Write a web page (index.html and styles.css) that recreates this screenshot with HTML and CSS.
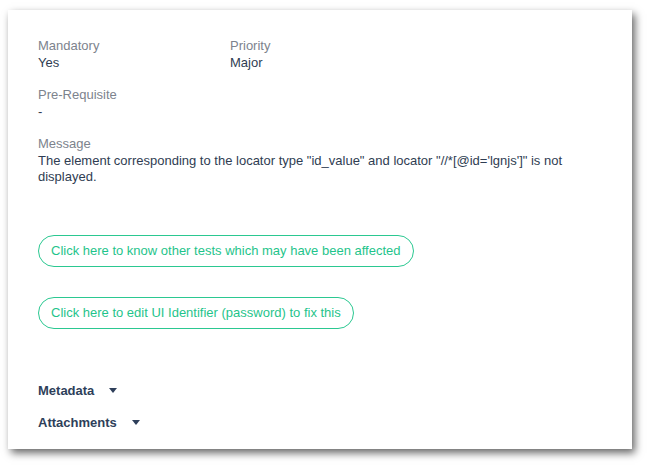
FILE: index.html
```html
<!DOCTYPE html>
<html lang="en">
<head>
    <meta charset="UTF-8">
    <meta name="viewport" content="width=device-width, initial-scale=1.0">
    <title>Test Failure Details</title>
    <link rel="stylesheet" href="styles.css">
</head>
<body>
    <div class="card">
        <div class="field-row">
            <div class="field">
                <div class="label">Mandatory</div>
                <div class="value">Yes</div>
            </div>
            <div class="field">
                <div class="label">Priority</div>
                <div class="value">Major</div>
            </div>
        </div>
        <div class="field">
            <div class="label">Pre-Requisite</div>
            <div class="value">-</div>
        </div>
        <div class="field">
            <div class="label">Message</div>
            <div class="value">The element corresponding to the locator type "id_value" and locator "//*[@id='lgnjs']" is not displayed.</div>
        </div>

        <div class="actions">
            <a class="pill-link" href="#">Click here to know other tests which may have been affected</a>
            <a class="pill-link" href="#">Click here to edit UI Identifier (password) to fix this</a>
        </div>

        <div class="sections">
            <div class="section-toggle">Metadata <span class="caret"></span></div>
            <div class="section-toggle">Attachments <span class="caret"></span></div>
        </div>
    </div>
</body>
</html>
```

FILE: styles.css
```css
body {
    font-family: "Liberation Sans", Arial, sans-serif;
    font-size: 13px;
    line-height: 16.5px;
    background-color: #ffffff;
    margin: 0;
    padding: 10px 16px 16px 8px;
}

.card {
    background: white;
    padding: 28px 30px 18px 30px;
    box-shadow: 3px 4px 8px rgba(0, 0, 0, 0.6);
}

.field-row {
    display: flex;
}

.field-row .field {
    width: 192px;
}

.field {
    margin-bottom: 16px;
}

.label {
    color: #7d838d;
}

.value {
    color: #2f3d52;
    padding-right: 20px;
}

.actions {
    display: flex;
    flex-direction: column;
    align-items: flex-start;
    gap: 30px;
    margin-top: 49px;
}

.pill-link {
    display: inline-block;
    color: #1fc48b;
    text-decoration: none;
    border: 1px solid #2bc891;
    border-radius: 16px;
    padding: 7px 12px 7px 12px;
    line-height: 16px;
}

.sections {
    margin-top: 54px;
}

.section-toggle {
    font-weight: bold;
    color: #2e3f5a;
    margin-bottom: 15.5px;
    display: flex;
    align-items: center;
}

.section-toggle:last-child {
    margin-bottom: 0;
}

.caret {
    display: inline-block;
    width: 0;
    height: 0;
    margin-left: 15px;
    margin-top: -1px;
    border-left: 4px solid transparent;
    border-right: 4px solid transparent;
    border-top: 5px solid #2e3f5a;
}
```
